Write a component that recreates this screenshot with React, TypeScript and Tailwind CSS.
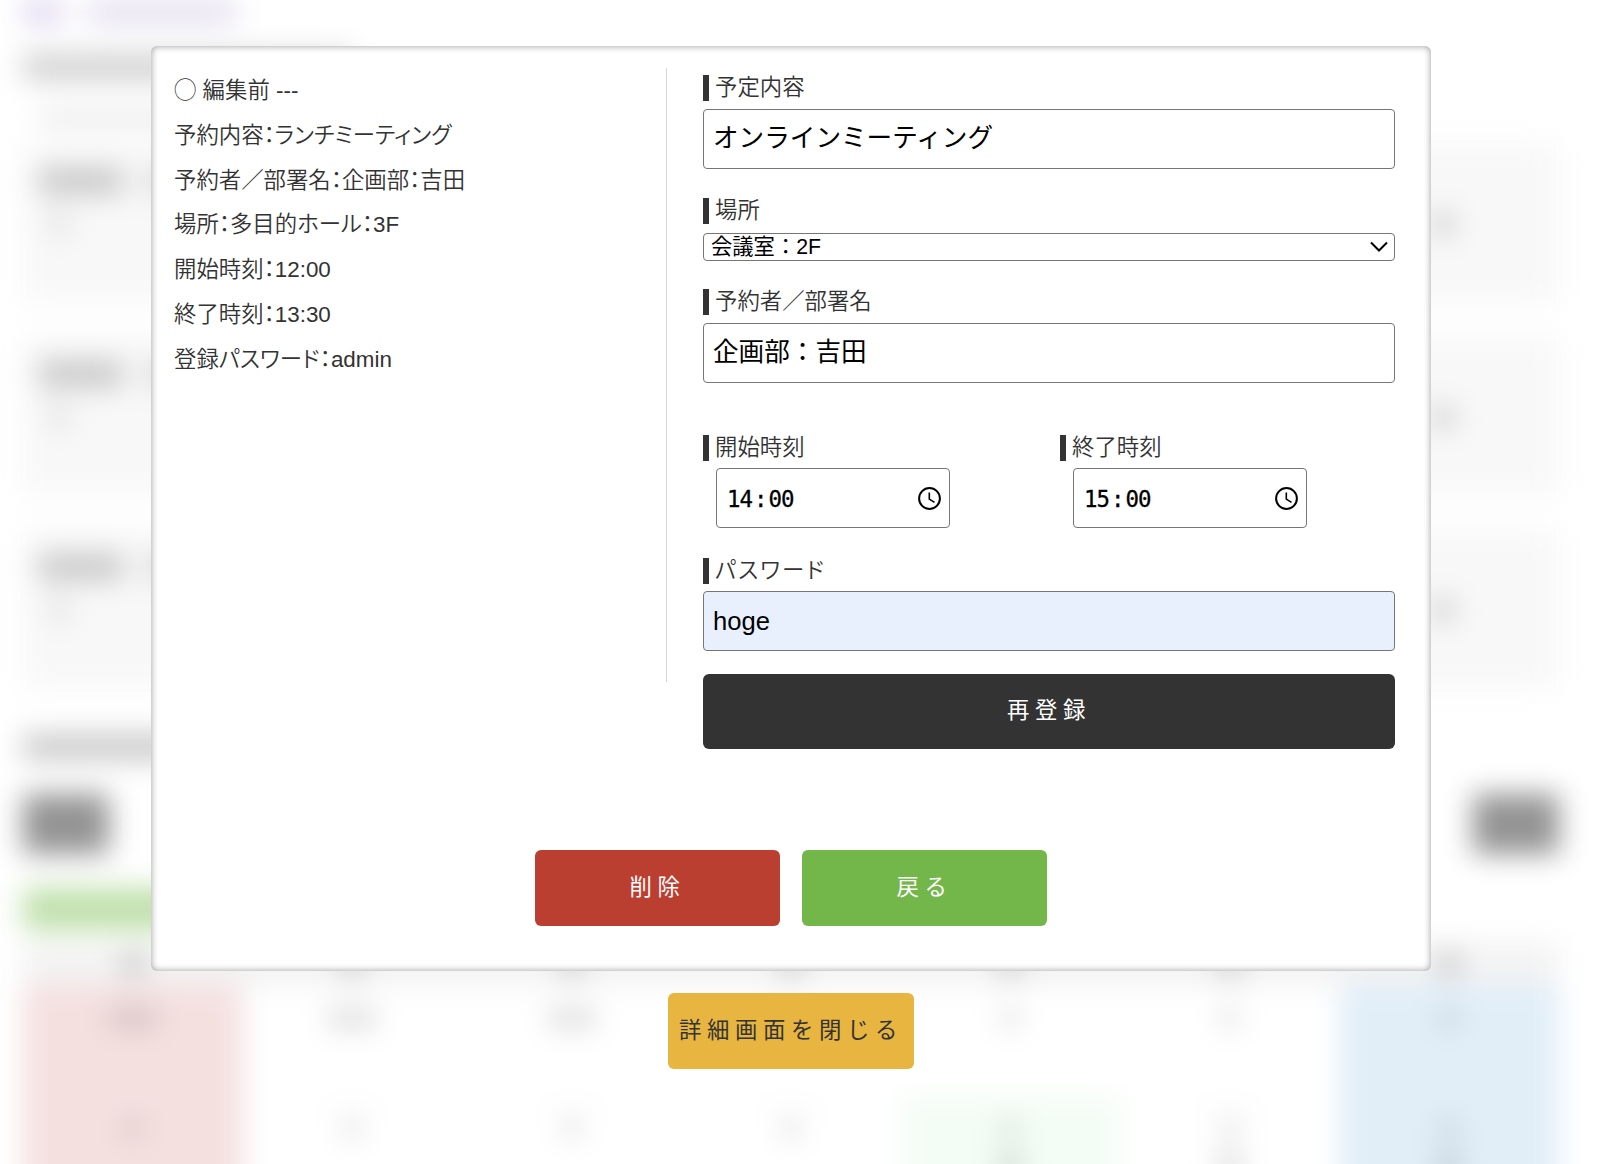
import { useState } from 'react';

interface FieldLabelProps {
  text: string;
  className?: string;
}

function FieldLabel({ text, className = '' }: FieldLabelProps) {
  return (
    <div className={`flex h-[26px] items-center border-l-[6px] border-[#333] pl-[6px] pt-px font-[350] text-[22.4px] leading-none [font-feature-settings:'palt'] ${className}`}>
      {text}
    </div>
  );
}

interface TextFieldProps {
  value: string;
  onChange: (value: string) => void;
  className?: string;
}

function TextField({ value, onChange, className = 'bg-white pb-2' }: TextFieldProps) {
  return (
    <input
      type="text"
      value={value}
      onChange={e => onChange(e.target.value)}
      className={`block h-[60px] w-full rounded-[4px] border border-[#767676] px-[9px] text-[25.6px] text-black ${className}`}
    />
  );
}

function TimeField({ label, value }: { label: string; value: string }) {
  const [hour, minute] = value.split(':');
  return (
    <div>
      <FieldLabel text={label} />
      <div className="ml-[13px] mt-[7px] flex h-[60px] w-[234px] items-center justify-between rounded-[4px] border border-[#767676] pl-2 pr-2 text-black">
        <div className="flex pt-[3px] font-['DejaVu_Sans_Mono',monospace] text-[22.4px] tracking-[-1px] [-webkit-text-stroke:0.3px_#000]">
          <span className="px-[2px]">{hour}</span>
          <span>:</span>
          <span className="px-[2px]">{minute}</span>
        </div>
        <svg width="24" height="24" viewBox="0 0 24 24" fill="none" stroke="currentColor">
          <circle cx="12.5" cy="12.5" r="10.4" strokeWidth="2" />
          <path d="M12.3 6.5v6.6l5.2 3.3" strokeWidth="1.6" />
        </svg>
      </div>
    </div>
  );
}

const summary = [
  '◯ 編集前 ---',
  '予約内容：ランチミーティング',
  '予約者／部署名：企画部：吉田',
  '場所：多目的ホール：3F',
  '開始時刻：12:00',
  '終了時刻：13:30',
  '登録パスワード：admin',
];

const weekColors = [
  'bg-[#f5e0e0]',
  'bg-white',
  'bg-white',
  'bg-white',
  'bg-white',
  'bg-white',
  'bg-[#e1eef8]',
];

// Page behind the dialog: only its blurred shapes are visible
function Backdrop() {
  return (
    <div className="absolute inset-0 overflow-hidden bg-white">
      <div className="flex w-[1582px] flex-col px-[23px] blur-[14px]">
        <div className="flex gap-6">
          <div className="h-6 w-10 bg-[#dfd6f0]" />
          <div className="h-6 w-[150px] bg-[#e4dff0]" />
        </div>
        <div className="mt-[29px] h-7 w-[330px] bg-[#d2d2d2]" />
        <div className="ml-4 mt-[29px] h-4 w-[300px] bg-[#e8e8e8]" />
        <div className="mt-[17px] flex flex-col gap-[33px]">
          {[0, 1, 2].map(i => (
            <div key={i} className="h-[160px] bg-[#f8f8f8] pl-4 pt-[25px]">
              <div className="flex gap-6">
                <div className="h-[26px] w-[84px] bg-[#c6c6c6]" />
                <div className="h-[26px] w-20 bg-[#d8d8d8]" />
              </div>
              <div className="ml-3 mr-[106px] mt-5 flex justify-between">
                <div className="h-5 w-4 bg-[#d8d8d8]" />
                <div className="h-5 w-5 bg-[#c4c4c4]" />
              </div>
            </div>
          ))}
        </div>
        <div className="mt-[45px] h-[26px] w-[300px] bg-[#c8c8c8]" />
        <div className="mt-[34px] flex justify-between">
          <div className="h-[60px] w-[86px] bg-[#939393]" />
          <div className="h-[60px] w-[86px] bg-[#939393]" />
        </div>
        <div className="mt-[34px] h-[42px] w-[400px] bg-[#c0e0ac]" />
        <div className="mt-3 grid h-[43px] grid-cols-7 bg-[#f3f3f3]">
          {weekColors.map((_, i) => (
            <div key={i} className="flex items-center justify-center">
              <div className="h-5 w-5 bg-[#bcbcbc]" />
            </div>
          ))}
        </div>
        <div className="grid grid-cols-7">
          {weekColors.map((color, i) => (
            <div key={i} className={`flex h-[112px] justify-center border-b border-[#f0f0f0] pt-6 ${color}`}>
              <div className={i < 3 ? 'h-[18px] w-12 bg-black/15' : 'h-[18px] w-4 bg-black/15'} />
            </div>
          ))}
        </div>
        <div className="grid grid-cols-7">
          {weekColors.map((color, i) => (
            <div key={i} className={`flex h-[110px] flex-col items-center gap-4 pt-[22px] ${i === 4 ? 'bg-[#f4fdf5]' : color}`}>
              <div className="h-[18px] w-4 bg-black/15" />
              {i > 3 && <div className="h-6 w-6 bg-black/15" />}
            </div>
          ))}
        </div>
      </div>
    </div>
  );
}

export default function App() {
  const [title, setTitle] = useState('オンラインミーティング');
  const [place, setPlace] = useState('会議室：2F');
  const [owner, setOwner] = useState('企画部：吉田');
  const [password, setPassword] = useState('hoge');

  const buttonClass = 'h-[76px] rounded-md text-[22.4px] leading-none tracking-[5.6px]';

  return (
    <div className="relative h-[1164px] overflow-hidden bg-white font-['Liberation_Sans','Noto_Sans_CJK_JP',sans-serif] text-[#333]">
      <Backdrop />
      <div className="relative flex w-[1582px] flex-col items-center pt-[46px]">
        <div className="h-[925px] w-[1280px] rounded-md bg-white pt-[22px] shadow-[inset_0_0_7px_#999]">
          <div className="flex h-[614px]">
            <div className="w-[516px] shrink-0 border-r border-[#d6d6d6] pl-[23px] pt-px text-[22.4px] font-[350] leading-[44.8px] [font-feature-settings:'palt']">
              {summary.map(line => (
                <p key={line}>{line}</p>
              ))}
            </div>
            <div className="ml-9 w-[692px] shrink-0 pt-[7px]">
              <FieldLabel text="予定内容" />
              <div className="mt-2">
                <TextField value={title} onChange={setTitle} />
              </div>

              <div className="mt-[29px]">
                <FieldLabel text="場所" />
              </div>
              <div className="relative mt-[9px]">
                <select
                  value={place}
                  onChange={e => setPlace(e.target.value)}
                  className="block h-7 w-full appearance-none rounded-[4px] border border-[#767676] bg-white pb-px pl-[7px] text-[21.3px] leading-6 text-black"
                >
                  <option>会議室：2F</option>
                  <option>多目的ホール：3F</option>
                </select>
                <svg className="pointer-events-none absolute right-[7px] top-[8px]" width="18" height="12" viewBox="0 0 18 12" fill="none" stroke="#000" strokeWidth="2">
                  <path d="M1 1.5l8 8 8-8" />
                </svg>
              </div>

              <div className="mt-7">
                <FieldLabel text="予約者／部署名" />
              </div>
              <div className="mt-2">
                <TextField value={owner} onChange={setOwner} />
              </div>

              <div className="mt-[52px] flex">
                <div className="w-[357px]">
                  <TimeField label="開始時刻" value="14:00" />
                </div>
                <TimeField label="終了時刻" value="15:00" />
              </div>

              <div className="mt-[30px]">
                <FieldLabel text="パスワード" className="tracking-[2px]" />
              </div>
              <div className="mt-[7px]">
                <TextField value={password} onChange={setPassword} className="bg-[#e8f0fe]" />
              </div>
              <button className="mt-[23px] block h-[75px] w-full rounded-md bg-[#333] text-[22.4px] leading-none tracking-[5.6px] text-white">
                再登録
              </button>
            </div>
          </div>
          <div className="mt-[168px] flex justify-center gap-[22px]">
            <button className={`w-[245px] bg-[#bb3f31] text-white ${buttonClass}`}>削除</button>
            <button className={`w-[245px] bg-[#73b74a] text-white ${buttonClass}`}>戻る</button>
          </div>
        </div>
        <button className={`mt-[22px] w-[246px] bg-[#e7b540] text-[#333] ${buttonClass}`}>詳細画面を閉じる</button>
      </div>
    </div>
  );
}
